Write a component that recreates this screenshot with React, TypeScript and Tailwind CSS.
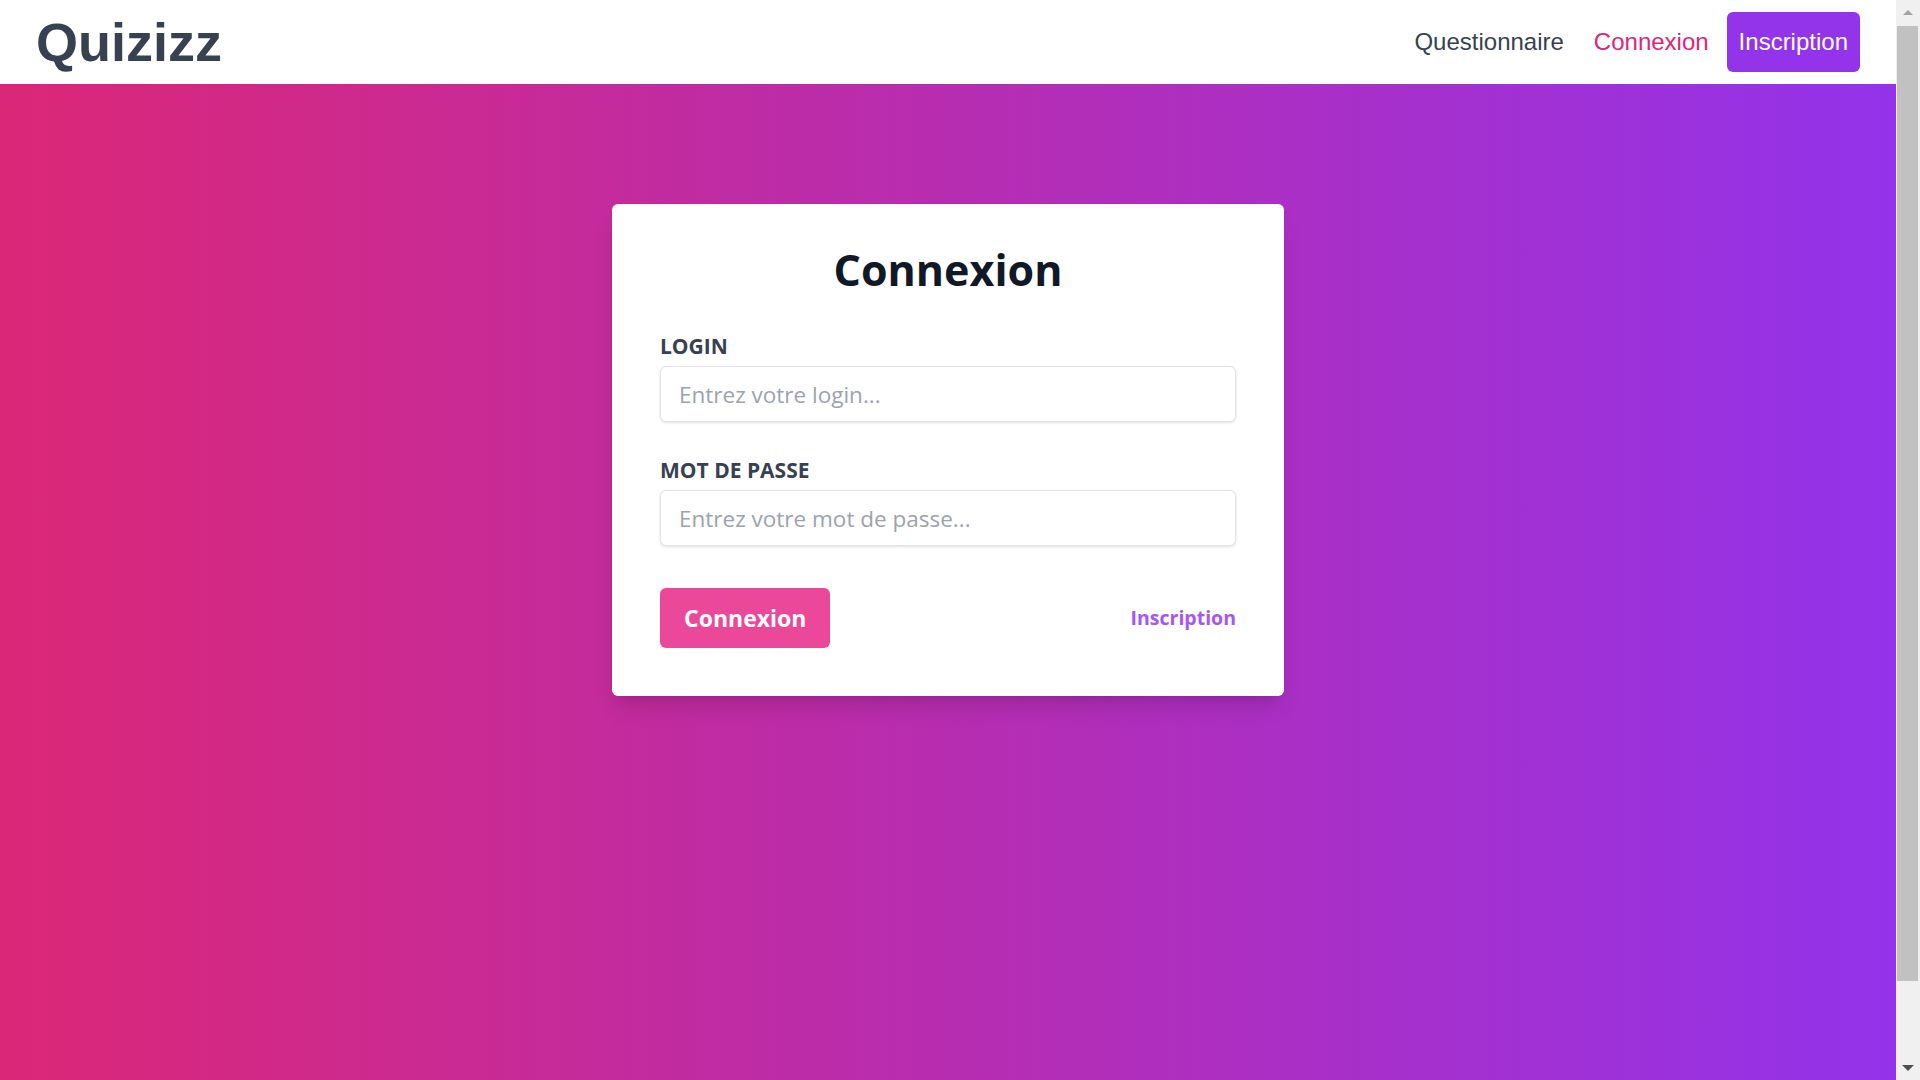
import React from "react";

const navLinks: { label: string; className: string }[] = [
  { label: "Questionnaire", className: "text-[#374151]" },
  { label: "Connexion", className: "text-[#db2777]" },
];

function Header() {
  return (
    <header className="bg-white h-[84px] px-[36px] py-[12px] flex items-center justify-between font-['Liberation_Sans',Arial,sans-serif] shrink-0">
      <a className="text-[54px] leading-[60px] font-bold text-[#374151]">Quizizz</a>
      <nav className="flex items-center gap-[6px] text-[24px] leading-[36px]">
        {navLinks.map(({ label, className }) => (
          <a key={label} className={`px-[12px] py-[12px] ${className}`}>
            {label}
          </a>
        ))}
        <a className="px-[12px] py-[12px] rounded-[6px] bg-[#9333ea] text-white">
          Inscription
        </a>
      </nav>
    </header>
  );
}

function Field({ label, placeholder, type }: { label: string; placeholder: string; type: string }) {
  return (
    <div className="flex flex-col">
      <label className="text-[21px] leading-[30px] font-bold uppercase text-[#374151] mb-[5px]">
        {label}
      </label>
      <input
        type={type}
        placeholder={placeholder}
        className="h-[56px] px-[18px] rounded-[6px] border border-[#e3e3e8] bg-white text-[22.5px] text-[#374151] placeholder:text-[#9ca3af] shadow-[0_1px_3px_rgba(0,0,0,0.12)] outline-none"
      />
    </div>
  );
}

function LoginCard() {
  return (
    <div className="w-[672px] bg-white rounded-[6px] pt-[39px] px-[48px] pb-[48px] shadow-[0_15px_25px_-5px_rgba(0,0,0,0.12),0_8px_10px_-6px_rgba(0,0,0,0.1)] font-['Open_Sans',sans-serif]">
      <h1 className="text-[43px] leading-[54px] font-bold text-center text-[#111827] mb-[34px]">
        Connexion
      </h1>
      <div className="flex flex-col gap-[33px]">
        <Field label="Login" placeholder="Entrez votre login..." type="text" />
        <Field label="Mot de passe" placeholder="Entrez votre mot de passe..." type="password" />
      </div>
      <div className="flex items-center justify-between mt-[42px]">
        <button className="h-[60px] px-[24px] rounded-[6px] bg-[#ec4899] text-white text-[23px] leading-[36px] font-bold">
          Connexion
        </button>
        <a className="text-[19.5px] font-bold text-[#a855f7]">Inscription</a>
      </div>
    </div>
  );
}

function Scrollbar() {
  return (
    <div className="w-[24px] shrink-0 bg-[#f0f0f0] flex flex-col">
      <div className="h-[25px] flex items-center justify-center">
        <div className="w-0 h-0 border-x-[5px] border-x-transparent border-b-[5px] border-b-[#a3a3a3]" />
      </div>
      <div className="flex-1 pt-[1px] pl-[1px] pr-[2px]">
        <div className="h-[955px] bg-[#c1c1c1]" />
      </div>
      <div className="h-[25px] flex items-center justify-center">
        <div className="w-0 h-0 border-x-[6px] border-x-transparent border-t-[6px] border-t-[#505050]" />
      </div>
    </div>
  );
}

export default function App() {
  return (
    <div className="h-screen flex overflow-hidden">
      <div className="flex-1 flex flex-col">
        <Header />
        <main className="flex-1 bg-[linear-gradient(to_right,#db2777,#9333ea)] flex justify-center items-start pt-[120px]">
          <LoginCard />
        </main>
      </div>
      <Scrollbar />
    </div>
  );
}
